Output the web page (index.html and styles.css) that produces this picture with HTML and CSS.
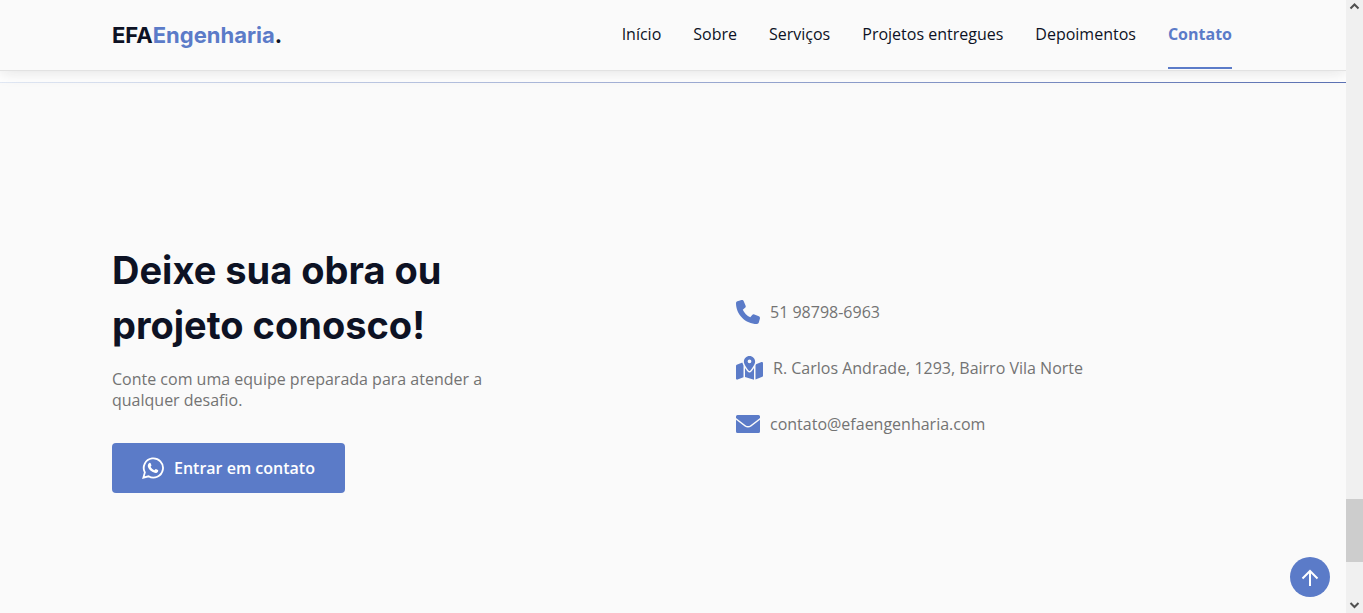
FILE: index.html
```html
<!DOCTYPE html>
<html lang="pt-BR">
<head>
<meta charset="utf-8">
<meta name="viewport" content="width=device-width, initial-scale=1">
<title>EFA Engenharia</title>
<link rel="stylesheet" href="styles.css">
</head>
<body>
<div class="page">
  <header class="header">
    <nav class="nav container">
      <a class="logo" href="#inicio">EFA<span class="logo-accent">Engenharia</span>.</a>
      <ul class="menu">
        <li><a class="menu-link" href="#inicio">Início</a></li>
        <li><a class="menu-link" href="#sobre">Sobre</a></li>
        <li><a class="menu-link" href="#servicos">Serviços</a></li>
        <li><a class="menu-link" href="#projetos">Projetos entregues</a></li>
        <li><a class="menu-link" href="#depoimentos">Depoimentos</a></li>
        <li><a class="menu-link active" href="#contato">Contato</a></li>
      </ul>
    </nav>
  </header>
  <main class="main">
    <div class="divider"></div>
    <section class="contact" id="contato">
      <div class="contact-grid container">
        <div class="intro">
          <h2 class="title">Deixe sua obra ou projeto conosco!</h2>
          <p class="lead">Conte com uma equipe preparada para atender a qualquer desafio.</p>
          <a class="button" href="#whatsapp">
            <svg class="button-icon" viewBox="0 0 24 24" fill="none" stroke="currentColor" stroke-width="2" aria-hidden="true"><path d="M1.500 22.500l1.600-5.700A10.500 10.500 0 1 1 7.100 21z"/><path fill="currentColor" stroke="none" d="M8.300 6.300c.5-.2.900 0 1.100.5l.9 2.100c.1.500-1 1.500-.9 1.800.8 1.700 2.100 3 4 3.700.4.100 1.300-1.400 1.700-1.300l2.300 1.100c.5.300.3 1.400 0 1.900-.6 1-2.400 1.600-3.600 1.200-3.900-1.100-6-3.200-7.300-6.300-.6-1.700.3-4.100 1.800-4.700z"/></svg>
            Entrar em contato
          </a>
        </div>
        <ul class="links">
          <li class="link-item">
            <svg class="icon" viewBox="0 0 512 512" aria-hidden="true"><path d="M164.900 24.600c-7.700-18.600-28-28.500-47.400-23.200l-88 24C12.100 30.200 0 46 0 64C0 311.400 200.600 512 448 512c18 0 33.800-12.100 38.600-29.500l24-88c5.300-19.400-4.600-39.700-23.200-47.400l-96-40c-16.300-6.800-35.200-2.100-46.300 11.600L304.700 368C234.300 334.700 177.300 277.700 144 207.300L193.300 167c13.700-11.200 18.400-30 11.600-46.300l-40-96z"/></svg>
            51 98798-6963
          </li>
          <li class="link-item">
            <svg class="icon icon-wide" viewBox="0 0 576 512" aria-hidden="true"><path d="M408 120c0 54.600-73.100 151.900-105.200 192c-7.700 9.600-22 9.600-29.600 0C241.100 271.900 168 174.600 168 120C168 53.700 221.700 0 288 0s120 53.700 120 120zm8 80.400c3.500-6.900 6.700-13.800 9.600-20.600c.5-1.200 1-2.500 1.500-3.700l116-46.400C558.900 123.400 576 135 576 152V422.800c0 9.800-6 18.600-15.100 22.300L416 503V200.400zM137.600 138.300c2.400 14.100 7.200 28.300 12.800 41.500c2.900 6.800 6.100 13.700 9.600 20.600V451.800L32.900 502.700C17.100 509 0 497.400 0 480.400V209.600c0-9.800 6-18.600 15.100-22.300l122.600-49zM327.800 332c13.900-17.400 35.700-45.700 56.200-77V504.300L192 449.400V255c20.500 31.300 42.300 59.600 56.200 77c20.500 25.600 59.100 25.600 79.600 0zM288 152a40 40 0 1 0 0-80 40 40 0 1 0 0 80z"/></svg>
            R. Carlos Andrade, 1293, Bairro Vila Norte
          </li>
          <li class="link-item">
            <svg class="icon" viewBox="0 0 24 24" aria-hidden="true"><path d="M1.500 3h21A1.500 1.500 0 0 1 24 4.500V6l-9.500 7.200c-1.600 1.200-3.400 1.200-5 0L0 6V4.500A1.500 1.500 0 0 1 1.500 3zM0 7.700l8.800 6.700c2 1.500 4.400 1.500 6.400 0L24 7.700v11.800a1.500 1.500 0 0 1-1.500 1.500h-21A1.500 1.500 0 0 1 0 19.500z"/></svg>
            contato@efaengenharia.com
          </li>
        </ul>
      </div>
    </section>
  </main>
  <a class="back-to-top" href="#inicio" aria-label="Voltar ao topo">
    <svg class="arrow" viewBox="0 0 24 24" aria-hidden="true"><path d="M12 21V6M4.500 13.500L12 6l7.500 7.500"/></svg>
  </a>
</div>
<div class="scrollbar" aria-hidden="true">
  <svg class="chevron" viewBox="0 0 17 17"><path d="M4.500 8.500l4-4 4 4"/></svg>
  <div class="track"><div class="thumb"></div></div>
  <svg class="chevron" viewBox="0 0 17 17"><path d="M4.500 7l4 4 4-4"/></svg>
</div>
</body>
</html>
```
FILE: styles.css
```css
:root {
  --brand: #5b7bc8;
  --ink: #0d1224;
  --text: #737373;
  --surface: #fafafa;
}

* {
  box-sizing: border-box;
  margin: 0;
  padding: 0;
}

body {
  display: flex;
  min-height: 100vh;
  background: #fff;
  color: var(--text);
  font: 400 16px/21px "Open Sans", sans-serif;
}

ul {
  list-style: none;
}

a {
  color: inherit;
  text-decoration: none;
}

.page {
  position: relative;
  display: flex;
  flex: 1;
  flex-direction: column;
  overflow: hidden;
}

.container {
  width: 100%;
  max-width: 1122px;
  margin: 0 auto;
  padding-right: 2px;
}

.header {
  z-index: 1;
  background: var(--surface);
  border-bottom: 1px solid #e2e2e2;
  box-shadow: 0 0 16px rgba(17, 17, 17, 0.15);
}

.nav {
  display: flex;
  align-items: center;
  justify-content: space-between;
  height: 70px;
}

.logo {
  color: var(--ink);
  font: 700 22px/32px Inter, sans-serif;
}

.logo-accent {
  color: var(--brand);
}

.menu {
  display: flex;
  gap: 32px;
}

.menu-link {
  display: block;
  color: var(--ink);
  line-height: 66px;
  border-bottom: 2px solid transparent;
}

.menu-link.active {
  color: var(--brand);
  font-weight: 700;
  border-color: var(--brand);
}

.main {
  display: flex;
  flex: 1;
  flex-direction: column;
  padding-top: 11px;
}

.divider {
  height: 1px;
  background: linear-gradient(90deg, #e2e9f5, #5c72b5);
}

.contact {
  display: flex;
  flex: 1;
  align-items: center;
  padding-top: 40px;
  background: var(--surface);
}

.contact-grid {
  display: grid;
  grid-template-columns: 1fr 1fr;
  gap: 128px;
  align-items: center;
}

.title {
  max-width: 400px;
  color: var(--ink);
  font: 700 38px/55px Inter, sans-serif;
}

.lead {
  max-width: 400px;
  margin: 16px 0 32px;
}

.button {
  display: inline-flex;
  align-items: center;
  gap: 10px;
  height: 50px;
  padding: 0 30px;
  border-radius: 4px;
  background: var(--brand);
  color: #fff;
  font-weight: 600;
}

.button-icon {
  width: 22px;
  height: 22px;
}

.links {
  display: grid;
  gap: 32px;
}

.link-item {
  display: flex;
  align-items: center;
  gap: 10px;
}

.icon {
  width: 24px;
  height: 24px;
  fill: var(--brand);
}

.icon-wide {
  width: 27px;
}

.back-to-top {
  position: absolute;
  right: 16px;
  bottom: 16px;
  display: grid;
  place-items: center;
  width: 40px;
  height: 40px;
  border-radius: 50%;
  background: var(--brand);
}

.arrow {
  width: 24px;
  height: 24px;
  fill: none;
  stroke: #fff;
  stroke-width: 2;
}

.scrollbar {
  display: flex;
  flex-direction: column;
  width: 17px;
  background: #f0f0f0;
}

.chevron {
  width: 17px;
  height: 17px;
  fill: none;
  stroke: #505050;
  stroke-width: 2;
}

.track {
  display: flex;
  flex: 1;
  align-items: flex-end;
  padding-bottom: 34px;
}

.thumb {
  width: 100%;
  height: 63px;
  background: #cdcdcd;
}
```
